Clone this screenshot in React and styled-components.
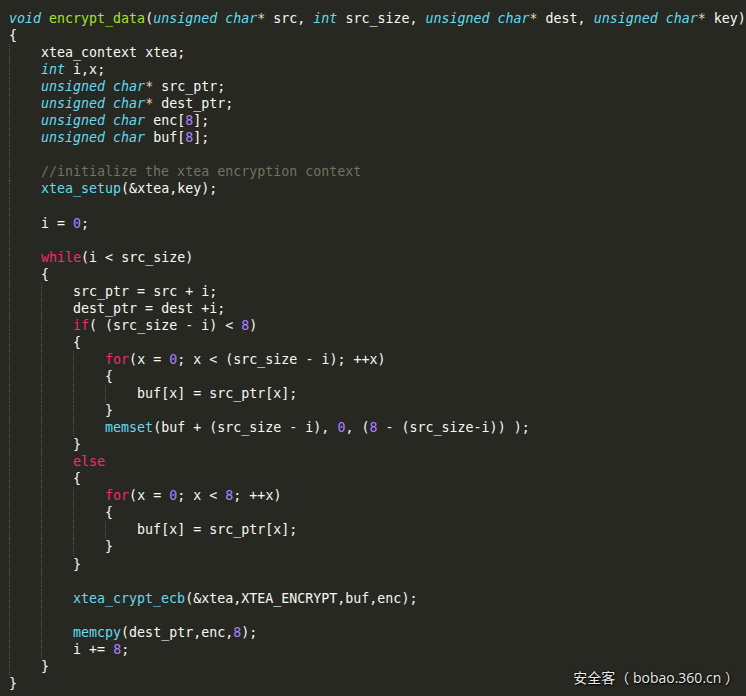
import React from "react";
import styled, { createGlobalStyle } from "styled-components";

const GlobalStyle = createGlobalStyle`
  html, body {
    margin: 0;
    padding: 0;
    background: #272822;
  }
`;

const SOURCE = `void encrypt_data(unsigned char* src, int src_size, unsigned char* dest, unsigned char* key)
{
    xtea_context xtea;
    int i,x;
    unsigned char* src_ptr;
    unsigned char* dest_ptr;
    unsigned char enc[8];
    unsigned char buf[8];

    //initialize the xtea encryption context
    xtea_setup(&xtea,key);

    i = 0;

    while(i < src_size)
    {
        src_ptr = src + i;
        dest_ptr = dest +i;
        if( (src_size - i) < 8)
        {
            for(x = 0; x < (src_size - i); ++x)
            {
                buf[x] = src_ptr[x];
            }
            memset(buf + (src_size - i), 0, (8 - (src_size-i)) );
        }
        else
        {
            for(x = 0; x < 8; ++x)
            {
                buf[x] = src_ptr[x];
            }
        }

        xtea_crypt_ecb(&xtea,XTEA_ENCRYPT,buf,enc);

        memcpy(dest_ptr,enc,8);
        i += 8;
    }
}`;

const KEYWORDS = ["while", "if", "for", "else"];
const TYPES = ["void", "int", "unsigned", "char"];

const Editor = styled.div`
  position: relative;
  width: 746px;
  height: 696px;
  overflow: hidden;
  background: #272822;
  padding: 10px 0 0 9px;
  box-sizing: border-box;
  font-family: "DejaVu Sans Mono", "Liberation Mono", monospace;
  font-size: 13.3px;
  color: #f8f8f2;
`;

const Line = styled.div`
  position: relative;
  height: 17.06px;
  line-height: 17px;
  white-space: pre;
`;

const Guide = styled.span`
  position: absolute;
  top: 0;
  bottom: 0;
  left: ${({ $col }) => $col * 8}px;
  border-left: 1px dotted #56574f;
`;

const colors = {
  kw: "#f92672",
  type: "#66d9ef",
  func: "#66d9ef",
  def: "#a6e22e",
  num: "#ae81ff",
  comment: "#75715e",
  ptr: "#f0d8a0",
};

const Tok = styled.span`
  color: ${({ $kind }) => colors[$kind] || "#f8f8f2"};
  font-style: ${({ $kind }) => ($kind === "type" ? "italic" : "normal")};
`;

const Watermark = styled.div`
  position: absolute;
  right: 7px;
  bottom: 9px;
  font-family: "Open Sans", "Noto Sans CJK SC", sans-serif;
  font-size: 14px;
  color: #ececec;
  text-shadow: 0 0 2px #000, 1px 1px 1px #000;
`;

function tokenize(text) {
  const out = [];
  const re = /(\/\/.*$)|([A-Za-z_][A-Za-z0-9_]*)|(\d+)|(\*)|(\s+)|(.)/g;
  let m;
  while ((m = re.exec(text))) {
    if (m[1]) out.push(["comment", m[1]]);
    else if (m[2]) {
      const w = m[2];
      const next = text.slice(re.lastIndex);
      if (KEYWORDS.includes(w)) out.push(["kw", w]);
      else if (TYPES.includes(w)) out.push(["type", w]);
      else if (next.startsWith("(")) out.push([w === "encrypt_data" ? "def" : "func", w]);
      else out.push(["plain", w]);
    } else if (m[3]) out.push(["num", m[3]]);
    else if (m[4]) out.push(["ptr", m[4]]);
    else out.push(["plain", m[0]]);
  }
  return out;
}

const lines = SOURCE.split("\n");
const indentOf = (l) => (l.trim() ? l.length - l.trimStart().length : null);
const indents = lines.map((l, i) => {
  const own = indentOf(l);
  if (own !== null) return own;
  let prev = 0;
  let next = 0;
  for (let j = i - 1; j >= 0; j--) if (indentOf(lines[j]) !== null) { prev = indentOf(lines[j]); break; }
  for (let j = i + 1; j < lines.length; j++) if (indentOf(lines[j]) !== null) { next = indentOf(lines[j]); break; }
  return Math.min(prev, next);
});

export default function App() {
  return (
    <>
      <GlobalStyle />
      <Editor>
        {lines.map((l, i) => {
          const guides = [];
          for (let c = 0; c < indents[i]; c += 4) guides.push(c);
          return (
            <Line key={i}>
              {guides.map((c) => (
                <Guide key={c} $col={c} />
              ))}
              {tokenize(l).map(([kind, t], k) => (
                <Tok key={k} $kind={kind}>
                  {t}
                </Tok>
              ))}
            </Line>
          );
        })}
        <Watermark>安全客（ bobao.360.cn ）</Watermark>
      </Editor>
    </>
  );
}
